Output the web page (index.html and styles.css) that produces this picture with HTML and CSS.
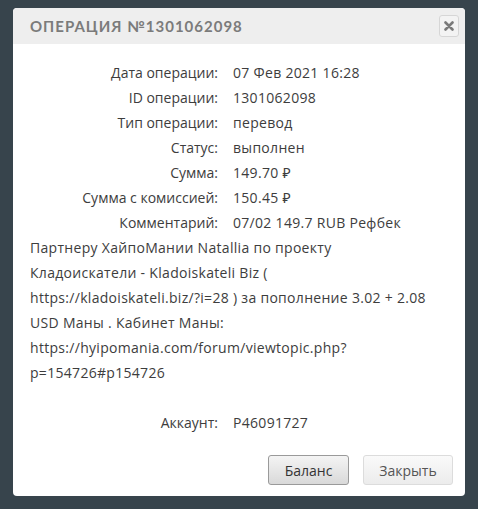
FILE: index.html
```html
<!DOCTYPE html>
<html>
<head>
<meta charset="utf-8">
<link rel="stylesheet" href="styles.css">
</head>
<body>
<div class="dialog">
  <div class="header">
    <div class="title">Операция №1301062098</div>
    <button class="close" aria-label="close">
      <svg width="10" height="10" viewBox="0 0 10 10"><path d="M1.5 1.5 L8.5 8.5 M8.5 1.5 L1.5 8.5" stroke="#7a7a7a" stroke-width="2.6" stroke-linecap="round"/></svg>
    </button>
  </div>
  <div class="body">
    <div class="row"><span class="label">Дата операции:</span><span class="value">07 Фев 2021 16:28</span></div>
    <div class="row"><span class="label">ID операции:</span><span class="value">1301062098</span></div>
    <div class="row"><span class="label">Тип операции:</span><span class="value">перевод</span></div>
    <div class="row"><span class="label">Статус:</span><span class="value">выполнен</span></div>
    <div class="row"><span class="label">Сумма:</span><span class="value">149.70 ₽</span></div>
    <div class="row"><span class="label">Сумма с комиссией:</span><span class="value">150.45 ₽</span></div>
    <div class="row"><span class="label">Комментарий:</span><span class="value">07/02 149.7 RUB Рефбек<br>Партнеру ХайпоМании Natallia по проекту<br>Кладоискатели - Kladoiskateli Biz (<br>https://kladoiskateli.biz/?i=28 ) за пополнение 3.02 + 2.08<br>USD Маны . Кабинет Маны:<br>https://hyipomania.com/forum/viewtopic.php?<br>p=154726#p154726</span></div>
    <div class="row spaced"><span class="label">Аккаунт:</span><span class="value">P46091727</span></div>
  </div>
  <div class="footer">
    <button class="btn btn-dark">Баланс</button>
    <button class="btn btn-light">Закрыть</button>
  </div>
</div>
</body>
</html>
```
FILE: styles.css
```css
html, body {
  margin: 0;
  padding: 0;
  background: #37444c;
  height: 509px;
  overflow: hidden;
}
.dialog {
  position: absolute;
  left: 13px;
  top: 8px;
  width: 452px;
  height: 488px;
  background: #fff;
  border-radius: 4px;
  overflow: hidden;
  font-family: "Open Sans", "Noto Sans", sans-serif;
}
.header {
  height: 36px;
  background: #eeeeee;
  display: flex;
  align-items: center;
  justify-content: space-between;
  padding: 0 6px 0 17px;
}
.title {
  text-transform: uppercase;
  color: #7b7b7b;
  font-family: "Lato", sans-serif;
  font-weight: 700;
  font-size: 15px;
  letter-spacing: 1px;
}
.close {
  width: 20px;
  height: 22px;
  border: 1px solid #d6d6d6;
  border-radius: 3px;
  background: #f3f3f3;
  display: flex;
  align-items: center;
  justify-content: center;
  padding: 0;
}
.body {
  padding: 16px 12px 0 17px;
  font-size: 14px;
  line-height: 25px;
  color: #3d3d3d;
}
.label {
  display: inline-block;
  width: 188px;
  text-align: right;
  margin-right: 15px;
}
.value {
  letter-spacing: 0.3px;
}
.spaced {
  margin-top: 25px;
}
.footer {
  display: flex;
  justify-content: flex-end;
  gap: 14px;
  padding: 20px 12px 0 0;
}
.btn {
  height: 30px;
  border-radius: 3px;
  font-family: "Open Sans", sans-serif;
  font-size: 14px;
  padding: 0 10px;
}
.btn-dark {
  width: 81px;
  border: 1px solid #9a9a9a;
  background: linear-gradient(#f4f4f4, #d9d9d9);
  color: #333;
}
.btn-light {
  width: 90px;
  border: 1px solid #dcdcdc;
  background: linear-gradient(#fafafa, #ececec);
  color: #555;
}
```
